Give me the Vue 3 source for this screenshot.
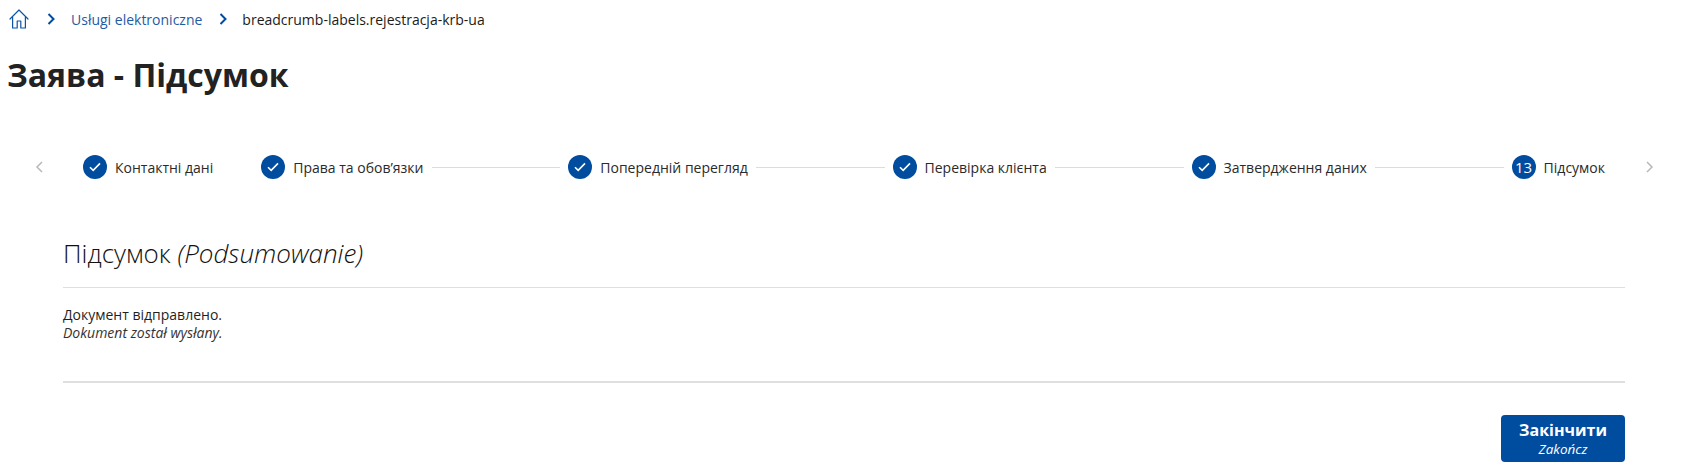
<template>
  <div class="page">
    <nav class="crumbs">
      <svg class="home" viewBox="0 0 20 20" width="20" height="20" fill="none" stroke="#0b55a6" stroke-width="1.2" stroke-linejoin="round" stroke-linecap="round">
        <path d="M1 10 10 1 19 10M3.6 8v11h4.6v-7h3.6v7h4.6V8" />
      </svg>
      <svg class="sep" viewBox="0 0 8 12" width="8" height="12"><path d="M1.5 1 6.5 6 1.5 11" fill="none" stroke="#004c9f" stroke-width="2" /></svg>
      <a class="crumb-link">Usługi elektroniczne</a>
      <svg class="sep" viewBox="0 0 8 12" width="8" height="12"><path d="M1.5 1 6.5 6 1.5 11" fill="none" stroke="#004c9f" stroke-width="2" /></svg>
      <span class="crumb-current">breadcrumb-labels.rejestracja-krb-ua</span>
    </nav>

    <h1>Заява - Підсумок</h1>

    <div class="stepper">
      <svg class="arrow" viewBox="0 0 8 12" width="8" height="12"><path d="M7 1 2 6 7 11" fill="none" stroke="#b8b8b8" stroke-width="1.5" /></svg>
      <div class="steps">
        <template v-for="(step, idx) in steps" :key="idx">
          <div v-if="idx > 1" class="line"></div>
          <div class="step" :class="{ first: idx === 0 }">
            <span class="dot">
              <svg v-if="step.done" viewBox="0 0 12 10" width="12" height="10"><path d="M1 5.2 4.2 8.4 11 1.4" fill="none" stroke="#fff" stroke-width="1.6" /></svg>
              <template v-else>{{ step.num }}</template>
            </span>
            <span class="label">{{ step.name }}</span>
          </div>
        </template>
      </div>
      <svg class="arrow" viewBox="0 0 8 12" width="8" height="12"><path d="M1 1 6 6 1 11" fill="none" stroke="#b8b8b8" stroke-width="1.5" /></svg>
    </div>

    <section class="content">
      <h2>Підсумок <em>(Podsumowanie)</em></h2>
      <div class="message">
        <p>Документ відправлено.</p>
        <p class="sub">Dokument został wysłany.</p>
      </div>
      <div class="actions">
        <button class="finish">
          <span class="finish-main">Закінчити</span>
          <span class="finish-sub">Zakończ</span>
        </button>
      </div>
    </section>
  </div>
</template>

<script setup>
const steps = [
  { name: 'Контактні дані', done: true },
  { name: 'Права та обов’язки', done: true },
  { name: 'Попередній перегляд', done: true },
  { name: 'Перевірка клієнта', done: true },
  { name: 'Затвердження даних', done: true },
  { name: 'Підсумок', done: false, num: 13 }
]
</script>

<style>
body {
  background: #fff;
}
</style>

<style scoped>
.page {
  width: 1681px;
  height: 468px;
  overflow: hidden;
  font-family: "Open Sans", "Noto Sans", sans-serif;
  color: #1f1f1f;
  font-size: 14px;
  box-sizing: border-box;
}

.crumbs {
  display: flex;
  align-items: center;
  height: 20px;
  padding: 9px 0 0 9px;
}

.sep {
  margin: 0 16px 0 18px;
  flex: none;
}

.crumb-link {
  color: #1d5ba4;
}

.crumb-link + .sep {
  margin-left: 17px;
  margin-right: 15px;
}

.crumb-current {
  color: #1b1b1b;
}

h1 {
  margin: 24px 0 0 7px;
  font-size: 32px;
  line-height: 44px;
  font-weight: 700;
  color: #222;
}

.stepper {
  display: flex;
  align-items: center;
  height: 24px;
  margin-top: 58px;
  padding-left: 35px;
}

.arrow {
  flex: none;
}

.steps {
  width: 1522px;
  margin: 0 41px 0 40px;
  display: flex;
  align-items: center;
  flex: none;
}

.step {
  display: flex;
  align-items: center;
  gap: 8px;
  flex: none;
}

.step.first {
  margin-right: 48px;
}

.dot {
  width: 24px;
  height: 24px;
  border-radius: 50%;
  background: #004c9f;
  color: #fff;
  display: flex;
  align-items: center;
  justify-content: center;
  font-size: 15px;
  flex: none;
}

.label {
  color: #2a2a2a;
}

.line {
  flex: 1;
  height: 1px;
  background: #dcdcdc;
  margin: 0 8px;
}

.content {
  margin: 0 56px 0 63px;
  padding-top: 56px;
}

h2 {
  margin: 0;
  font-size: 26px;
  line-height: 36px;
  font-weight: 300;
  color: #111;
  padding-bottom: 16px;
  border-bottom: 1px solid #dfdfdf;
}

.message {
  padding: 16px 0 40px;
  border-bottom: 2px solid #dfdfdf;
}

.message p {
  margin: 0;
  font-size: 14px;
  line-height: 21px;
}

.message .sub {
  font-size: 14px;
  line-height: 16px;
  font-style: italic;
  color: #333;
}

.actions {
  display: flex;
  justify-content: flex-end;
  margin-top: 32px;
}

.finish {
  width: 124px;
  height: 47px;
  border: none;
  border-radius: 4px;
  background: #004c9f;
  color: #fff;
  font-family: inherit;
  display: flex;
  flex-direction: column;
  align-items: center;
  justify-content: center;
  padding: 0;
}

.finish-main {
  font-size: 16px;
  line-height: 21px;
  font-weight: 700;
}

.finish-sub {
  font-size: 13.5px;
  line-height: 16px;
  font-style: italic;
}
</style>
